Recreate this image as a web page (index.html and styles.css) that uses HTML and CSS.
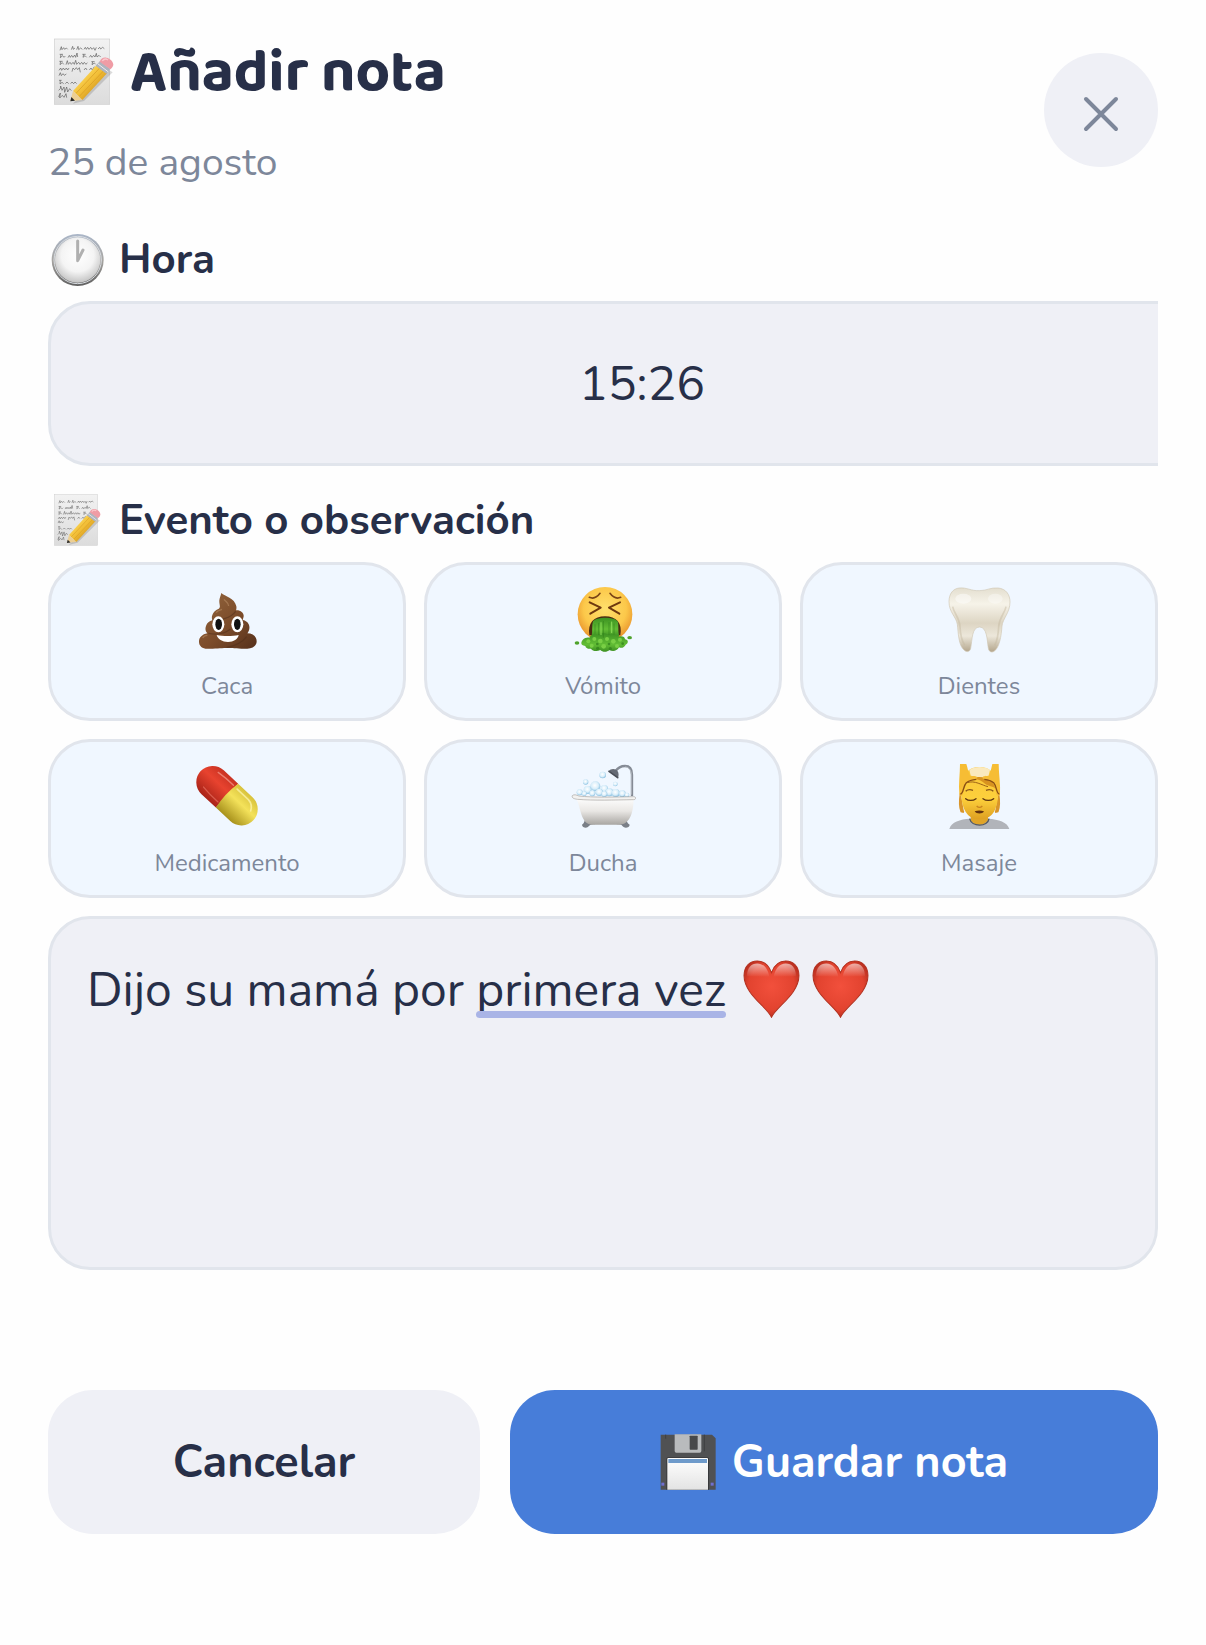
FILE: index.html
```html
<!DOCTYPE html>
<html lang="es">
<head>
    <meta charset="UTF-8">
    <meta name="viewport" content="width=device-width, initial-scale=1.0">
    <title>Añadir nota</title>
    <link rel="stylesheet" href="styles.css">
</head>
<body>
    <!-- Shared shapes -->
    <svg class="sprite" aria-hidden="true">
        <defs>
            <linearGradient id="paper" x1="0" y1="0" x2="0" y2="1">
                <stop offset="0" stop-color="#f2f2f2"/>
                <stop offset="1" stop-color="#dcdcdc"/>
            </linearGradient>
            <linearGradient id="pencil" x1="0" y1="0" x2="1" y2="1">
                <stop offset="0.2" stop-color="#ffdf62"/>
                <stop offset="0.5" stop-color="#f1bd36"/>
                <stop offset="0.8" stop-color="#c98c16"/>
            </linearGradient>
            <radialGradient id="heartFill" cx="0.5" cy="0.45" r="0.6">
                <stop offset="0" stop-color="#f2503c"/>
                <stop offset="0.7" stop-color="#e2432f"/>
                <stop offset="1" stop-color="#b02a1c"/>
            </radialGradient>
            <linearGradient id="heartShine" x1="0" y1="0" x2="0" y2="1">
                <stop offset="0" stop-color="#fff" stop-opacity="0.6"/>
                <stop offset="1" stop-color="#fff" stop-opacity="0"/>
            </linearGradient>
        </defs>
        <symbol id="memo" viewBox="-18 0 204 208">
            <rect x="1" y="2" width="166" height="196" fill="url(#paper)" stroke="#cfcfcf" stroke-width="2"/>
            <g fill="none" stroke="#5c5c5c" stroke-width="2" stroke-linejoin="round">
                <path d="M18 36l4-11 2 9 5-6 3 5 5-4 4 4M52 34l4-10 2 9 5-4M68 34l4-10 2 10 6-5 5 4M90 33l4-6 3 6 4-6 4 6 5-6 4 6 5-5 4 8 4-9M132 32l5-5 3 5 6-5 5 4"/>
                <path d="M17 48h10m-6 0l-2 10 7-6 4 5 4-4M42 58l4-7 3 6 4-6 4 6 5-7 3 7 4-13 2 12M85 48h10m-6 0l-2 9 6-5 5 5M106 57l4-6 4 6 5-6 4 5 4-11 2 11 6-5 5 5"/>
                <path d="M16 69h10m-6 0l-2 10 7-6 4 5M36 79l4-12 3 11 5-6 4 6 5-6 4 6 4-12 3 12 6-6 4 6 5-6 4 6 4-6 5 6 4-5M112 70h10m-6 0l-2 9 7-5 4 4"/>
                <path d="M15 96l5-7 3 7 5-7 4 6 5-6 4 6 4-6M54 100l3-11 5 5 5-6 4 6 5-6 3 14M90 95l5-6 4 6M106 95l5-6 4 6 6-10"/>
                <path d="M15 112l4-9 3 9 5-6 4 5 6-4M15 126h8m-4 0l-1 11 6-5 5 4M34 136l5-5 5 5M50 136l4-5 5 5 4-5 5 5"/>
                <path d="M14 156l5-5 1-8 4 13 6-10 2 16 6-16 3 15 6-10 5 6M14 176l5-12-2 15 8-8 5 6 6-11 2 12"/>
            </g>
            <path d="M56 196L160 92l16 10L90 188z" fill="#000" opacity="0.14"/>
            <path d="M57 158L128 80l31 25-74 80z" fill="url(#pencil)"/>
            <path d="M66 165l72-77M76 174l74-78" stroke="#d69a1f" stroke-width="2"/>
            <path d="M57 158l28 27-36 3z" fill="#edcf93"/>
            <path d="M52 176l11 11-14 2z" fill="#2b2b2b"/>
            <path d="M125 82l13-14 31 24-12 14z" fill="#aeb4be"/>
            <path d="M131 76l31 24" stroke="#eceef2" stroke-width="3"/>
            <path d="M137 70c4-10 12-14 20-12 12 2 20 12 21 20 0 6-4 11-9 15z" fill="#ef9ca5"/>
            <path d="M145 68c4-6 11-7 17-3" fill="none" stroke="#f9c8cd" stroke-width="4"/>
        </symbol>
        <symbol id="heart" viewBox="0 0 168 171">
            <path d="M84 169C70 138 3 100 3 46 3 18 20 3 42 3c20 0 34 12 42 34C92 15 106 3 126 3c22 0 39 15 39 43 0 54-67 92-81 123z" fill="url(#heartFill)" stroke="#b3311f" stroke-width="3"/>
            <path d="M12 48C12 22 24 10 42 10s31 14 36 40zM90 50c5-26 18-40 36-40s30 12 30 38z" fill="url(#heartShine)"/>
        </symbol>
    </svg>

    <main class="sheet">
        <header class="header">
            <div>
                <h1 class="title"><svg class="title-icon" aria-hidden="true"><use href="#memo"/></svg>Añadir nota</h1>
                <p class="date">25 de agosto</p>
            </div>
            <button type="button" class="close" aria-label="Cerrar">
                <svg viewBox="0 0 36 36" aria-hidden="true"><path d="M3 3l30 30M33 3L3 33"/></svg>
            </button>
        </header>

        <form class="note-form">
            <label class="label" for="hora">
                <svg class="clock" viewBox="54 36 168 162" aria-hidden="true">
                    <defs>
                        <linearGradient id="rim" x1="0" y1="0" x2="0" y2="1">
                            <stop offset="0" stop-color="#aab6c8"/>
                            <stop offset="0.5" stop-color="#a8a6a3"/>
                            <stop offset="1" stop-color="#5f5f5f"/>
                        </linearGradient>
                        <radialGradient id="face" cx="0.5" cy="0.4" r="0.6">
                            <stop offset="0" stop-color="#fff"/>
                            <stop offset="0.6" stop-color="#f4f4f4"/>
                            <stop offset="1" stop-color="#c4c4c4"/>
                        </radialGradient>
                    </defs>
                    <circle cx="143" cy="117" r="78" fill="url(#rim)"/>
                    <circle cx="143" cy="117" r="71" fill="none" stroke="#d9dde2" stroke-width="3"/>
                    <circle cx="143" cy="117" r="68" fill="url(#face)"/>
                    <path d="M143 60v59l16-32" fill="none" stroke="#b0b0b0" stroke-width="9" stroke-linecap="round" stroke-linejoin="round"/>
                </svg>
                Hora
            </label>
            <div class="time-clip">
                <input class="time" type="text" inputmode="numeric" id="hora" name="hora" value="15:26">
            </div>

            <label class="label" for="nota"><svg class="label-memo" aria-hidden="true"><use href="#memo"/></svg>Evento o observación</label>
            <div class="events">
                <button type="button" class="event">
                    <svg viewBox="462 81 198 198" aria-hidden="true">
                        <defs>
                            <linearGradient id="poop" x1="0" y1="0" x2="1" y2="1">
                                <stop offset="0" stop-color="#94673f"/>
                                <stop offset="0.55" stop-color="#7c4c2a"/>
                                <stop offset="1" stop-color="#55301b"/>
                            </linearGradient>
                        </defs>
                        <path d="M544 99c10 10 40 14 45 40 1 5 0 9-1 12 14-1 24 8 23 18-1 5-2 8-3 11 14 2 22 14 20 26-1 6-3 10-6 14 16 0 28 10 28 24 0 14-12 22-28 22-24 1-48-2-60-2s-40 3-60 2c-15 0-25-8-25-21s10-22 25-25c-6-6-7-14-4-22 3-9 10-15 19-17-4-10 0-26 18-34 9-6 2-14 3-26 1-8 4-14 6-22z" fill="url(#poop)"/>
                        <path d="M519 178c22 4 52-3 68-24M505 220c30 6 50 0 66-12M560 262c30-4 46-14 60-32" fill="none" stroke="#4f2d19" stroke-width="4" opacity="0.5"/>
                        <path d="M552 118c6 8 14 10 14 20M528 158c4-6 12-8 18-10M488 234c3-5 8-8 14-8" fill="none" stroke="#b58a62" stroke-width="4" opacity="0.6"/>
                        <ellipse cx="535" cy="193" rx="18" ry="24" fill="#fff"/>
                        <ellipse cx="592" cy="193" rx="18" ry="24" fill="#fff"/>
                        <ellipse cx="536" cy="193" rx="10" ry="17" fill="#111"/>
                        <ellipse cx="592" cy="193" rx="10" ry="17" fill="#111"/>
                        <path d="M530 225c20 4 46 4 66 0-2 12-15 21-32 21s-31-9-34-21z" fill="#fff"/>
                    </svg>
                    <span>Caca</span>
                </button>
                <button type="button" class="event">
                    <svg viewBox="90 51 198 198" aria-hidden="true">
                        <defs>
                            <radialGradient id="skin" cx="0.5" cy="0.4" r="0.6">
                                <stop offset="0" stop-color="#ffe06c"/>
                                <stop offset="0.65" stop-color="#fcc84a"/>
                                <stop offset="1" stop-color="#e8922c"/>
                            </radialGradient>
                            <linearGradient id="slime" x1="0" y1="0" x2="0" y2="1">
                                <stop offset="0" stop-color="#3c9222"/>
                                <stop offset="0.6" stop-color="#62bd35"/>
                                <stop offset="1" stop-color="#3c9022"/>
                            </linearGradient>
                        </defs>
                        <circle cx="195" cy="133" r="82" fill="url(#skin)"/>
                        <path d="M148 82c11 5 23 0 32-12M242 82c-11 5-23 0-32-12" fill="none" stroke="#7b4416" stroke-width="5" stroke-linecap="round"/>
                        <path d="M149 97l33 16-31 18M240 97l-33 16 31 18" fill="none" stroke="#6e390f" stroke-width="6" stroke-linecap="round" stroke-linejoin="round"/>
                        <path d="M148 196c-6-38 14-57 47-57s53 19 46 57z" fill="#4b2b12"/>
                        <path d="M155 200c3-20 0-34 4-46 12-14 62-14 74 0 4 12 0 28 5 46z" fill="url(#slime)"/>
                        <path d="M124 220c0-10 12-20 24-17 6-12 18-12 26-8 10-8 24-6 32-1 10-4 24-2 29 6 10-4 20 0 20 8 10 0 12 12 2 16-4 8-12 12-20 8-6 12-20 14-28 8-10 8-22 6-28 0-12 6-24 2-28-4-8 2-16-2-17-8-8-1-12-3-12-8z" fill="url(#slime)"/>
                        <path d="M176 160v34M190 154v48M207 158v36M222 162v30M165 164v26" stroke="#2d7b19" stroke-width="3" stroke-linecap="round" opacity="0.5"/>
                        <path d="M183 158v36M215 156v32" stroke="#8bdc58" stroke-width="3" stroke-linecap="round"/>
                        <g fill="#79cf45">
                            <circle cx="145" cy="214" r="6"/><circle cx="163" cy="207" r="6"/><circle cx="181" cy="213" r="7"/>
                            <circle cx="201" cy="207" r="6"/><circle cx="220" cy="214" r="7"/><circle cx="240" cy="209" r="6"/>
                            <circle cx="155" cy="227" r="6"/><circle cx="191" cy="229" r="7"/><circle cx="231" cy="228" r="6"/>
                        </g>
                        <g fill="#2f7e1b" opacity="0.7">
                            <circle cx="172" cy="222" r="4"/><circle cx="207" cy="222" r="4"/><circle cx="211" cy="236" r="5"/>
                            <circle cx="173" cy="235" r="5"/><circle cx="248" cy="221" r="4"/>
                        </g>
                        <ellipse cx="111" cy="219" rx="7" ry="5" fill="#4ea22b"/>
                        <ellipse cx="269" cy="203" rx="7" ry="5" fill="#4ea22b"/>
                    </svg>
                    <span>Vómito</span>
                </button>
                <button type="button" class="event">
                    <svg viewBox="78 51 198 198" aria-hidden="true">
                        <defs>
                            <linearGradient id="tooth" x1="0" y1="0" x2="0" y2="1">
                                <stop offset="0" stop-color="#e4dfd0"/>
                                <stop offset="0.25" stop-color="#f6f3e9"/>
                                <stop offset="0.55" stop-color="#ddd5c3"/>
                                <stop offset="0.75" stop-color="#ece7da"/>
                                <stop offset="1" stop-color="#b3a58b"/>
                            </linearGradient>
                        </defs>
                        <path d="M118 54c24-2 34 9 60 8 22 0 34-10 56-8 24 2 36 20 36 42 0 32-22 50-24 72-2 30-8 66-24 76-8 5-16 0-17-10-4-26-4-62-26-63-24 0-22 38-27 64-2 10-11 13-19 6-18-14-18-54-21-78-3-22-25-36-25-68 0-24 12-39 31-41z" fill="url(#tooth)" stroke="#d0c7b3" stroke-width="2"/>
                        <path d="M98 110c4 22 20 30 22 60 1 20 6 44 14 56M258 110c-4 22-20 30-22 60-1 20-5 44-12 56" fill="none" stroke="#c4b99f" stroke-width="5" opacity="0.45"/>
                        <ellipse cx="130" cy="86" rx="24" ry="15" fill="#fff" opacity="0.45"/>
                        <ellipse cx="226" cy="86" rx="22" ry="15" fill="#fff" opacity="0.35"/>
                    </svg>
                    <span>Dientes</span>
                </button>
                <button type="button" class="event">
                    <svg viewBox="42 42 198 198" aria-hidden="true">
                        <defs>
                            <linearGradient id="pillRed" x1="0" y1="0" x2="0" y2="1">
                                <stop offset="0" stop-color="#c93222"/>
                                <stop offset="0.4" stop-color="#e8432f"/>
                                <stop offset="1" stop-color="#a92318"/>
                            </linearGradient>
                            <linearGradient id="pillYellow" x1="0" y1="0" x2="0" y2="1">
                                <stop offset="0" stop-color="#d8c23c"/>
                                <stop offset="0.4" stop-color="#f4e25a"/>
                                <stop offset="1" stop-color="#a8921c"/>
                            </linearGradient>
                        </defs>
                        <g transform="rotate(43 141 137)">
                            <path d="M141 88H82a49 49 0 0 0 0 98h59z" fill="url(#pillRed)"/>
                            <path d="M141 88h59a49 49 0 0 1 0 98h-59q-9-49 0-98z" fill="url(#pillYellow)"/>
                            <path d="M74 104q28-4 60-3" fill="none" stroke="#f59b8f" stroke-width="4" stroke-linecap="round" opacity="0.7"/>
                            <path d="M72 166q28 4 62 3" fill="none" stroke="#f58a7a" stroke-width="4" stroke-linecap="round" opacity="0.5"/>
                            <path d="M150 102h46q20 2 28 20" fill="none" stroke="#fff7b0" stroke-width="5" stroke-linecap="round" opacity="0.7"/>
                        </g>
                    </svg>
                    <span>Medicamento</span>
                </button>
                <button type="button" class="event">
                    <svg viewBox="30 42 198 198" aria-hidden="true">
                        <defs>
                            <linearGradient id="tub" x1="0" y1="0" x2="0" y2="1">
                                <stop offset="0" stop-color="#fff"/>
                                <stop offset="0.5" stop-color="#e9e7e4"/>
                                <stop offset="1" stop-color="#a9a6a2"/>
                            </linearGradient>
                            <radialGradient id="bubble" cx="0.45" cy="0.4" r="0.6">
                                <stop offset="0" stop-color="#fff"/>
                                <stop offset="0.6" stop-color="#d9eefa"/>
                                <stop offset="1" stop-color="#86bfe0"/>
                            </radialGradient>
                        </defs>
                        <path d="M216 138V74c0-18-9-26-21-26-12 0-22 6-29 16" fill="none" stroke="#858b95" stroke-width="7"/>
                        <path d="M214 134V74c0-14-8-23-19-23" fill="none" stroke="#c9ced5" stroke-width="2"/>
                        <path d="M146 64c6-9 20-10 27 0 4 6 3 13 1 20z" fill="#666b75"/>
                        <path d="M147 64l26 19" stroke="#4b4f57" stroke-width="5" stroke-linecap="round"/>
                        <g fill="url(#bubble)">
                            <circle cx="77" cy="96" r="8"/><circle cx="128" cy="75" r="10"/><circle cx="166" cy="102" r="7"/>
                            <circle cx="59" cy="127" r="9"/><circle cx="83" cy="120" r="12"/><circle cx="106" cy="109" r="15"/>
                            <circle cx="133" cy="116" r="11"/><circle cx="118" cy="127" r="11"/><circle cx="97" cy="130" r="9"/>
                            <circle cx="148" cy="127" r="12"/><circle cx="167" cy="129" r="12"/><circle cx="187" cy="131" r="10"/>
                            <circle cx="133" cy="132" r="9"/><circle cx="201" cy="135" r="7"/><circle cx="73" cy="131" r="7"/>
                        </g>
                        <path d="M80 202c-8 2-3 16-14 22 0 10 16 12 20 5 6-6 12-6 20-6zM194 202c8 2 3 16 15 22 0 10-16 12-21 5-4-6-10-6-18-6z" fill="#7a7f87"/>
                        <path d="M45 142h176c0 38-8 82-43 82H98c-28 0-34-30-42-60-2-8-5-14-11-22z" fill="url(#tub)"/>
                        <path d="M37 137c5-5 12-2 20 1 40 5 110 3 164 2 8 0 8 9 0 9-60 1-120 3-168-1-8-1-19-3-16-11z" fill="#f3f2f0" stroke="#a5a29e" stroke-width="2"/>
                    </svg>
                    <span>Ducha</span>
                </button>
                <button type="button" class="event">
                    <svg viewBox="48 42 198 198" aria-hidden="true">
                        <defs>
                            <linearGradient id="massageSkin" x1="0" y1="0" x2="0" y2="1">
                                <stop offset="0" stop-color="#f9c638"/>
                                <stop offset="0.6" stop-color="#fdd03c"/>
                                <stop offset="1" stop-color="#dfa021"/>
                            </linearGradient>
                        </defs>
                        <path d="M58 237c6-22 32-29 62-31h54c32 2 58 10 64 31z" fill="#b1b4ba"/>
                        <path d="M122 190h52v20c-10 19-42 19-52 0z" fill="#e0a428"/>
                        <path d="M119 206c5 26 55 26 58 0" fill="none" stroke="#55585e" stroke-width="4"/>
                        <path d="M92 130c-3 20-3 42 2 54l8 2M205 130c3 20 3 42-2 54l-8 2" fill="#d9952a" stroke="#d9952a" stroke-width="6"/>
                        <path d="M94 120c0-50 23-69 54-69s56 19 56 69c2 58-17 88-55 88s-57-33-55-88z" fill="url(#massageSkin)"/>
                        <path d="M118 60c12-12 50-12 62 0l-6 24h-50z" fill="#fae9bd"/>
                        <path d="M98 126c2-24 14-36 28-38 20-2 28 4 40 14 8 6 24 6 32 16 2-22-6-32-24-34-30-6-62-3-72 16z" fill="#d8931f"/>
                        <path d="M112 98c22-8 44 8 62 12" fill="none" stroke="#9e6317" stroke-width="3"/>
                        <path d="M90 42h19c4 12 6 26 11 35 8 1 20 0 22 5 3 7-16 6-24 9-14 8-14 25-20 44-3 4-9 3-10-3-3-28 2-60 2-90zM187 42h19c0 30 6 62 4 90-1 6-7 7-10 3-6-21-6-36-19-44-8-3-26-2-24-9 2-5 13-4 20-5 5-10 7-23 10-35z" fill="#f6bd34"/>
                        <path d="M91 132c10 0 8-24 18-34q10-8 30-10M208 132c-9 0-8-24-17-34q-10-8-28-10" fill="none" stroke="#8a4f14" stroke-width="4"/>
                        <path d="M107 124c6-6 14-6 22-3M190 124c-6-6-14-6-22-3" fill="none" stroke="#87551a" stroke-width="4"/>
                        <path d="M107 146c8 7 22 7 31 0M159 146c9 7 23 7 32 0" fill="none" stroke="#5d3510" stroke-width="4" stroke-linecap="round"/>
                        <path d="M140 168c5 5 12 5 17 0" fill="none" stroke="#c8841d" stroke-width="4"/>
                        <path d="M134 184c10-3 18-3 28 0-4 9-23 9-28 0z" fill="#63320f"/>
                    </svg>
                    <span>Masaje</span>
                </button>
            </div>

            <div class="note-box">
                <textarea class="note" id="nota" name="nota" spellcheck="false">Dijo su mamá por primera vez</textarea>
                <span class="suggestion"></span>
                <div class="hearts">
                    <svg aria-hidden="true"><use href="#heart"/></svg>
                    <svg aria-hidden="true"><use href="#heart"/></svg>
                </div>
            </div>

            <div class="actions">
                <button type="button" class="btn btn-cancel">Cancelar</button>
                <button type="submit" class="btn btn-save">
                    <svg viewBox="64 40 168 168" aria-hidden="true">
                        <defs>
                            <linearGradient id="diskLabel" x1="0" y1="0" x2="0" y2="1">
                                <stop offset="0" stop-color="#fff"/>
                                <stop offset="1" stop-color="#e3e3e3"/>
                            </linearGradient>
                        </defs>
                        <path d="M66 42h154l11 11v154H66z" fill="#505153"/>
                        <path d="M81 42v12M197 42v50" stroke="#3f4042" stroke-width="3"/>
                        <path d="M108 41h80v50q0 5-5 5h-70q-5 0-5-5z" fill="#b9bbbd"/>
                        <rect x="153" y="45" width="24" height="42" rx="2" fill="#47484a"/>
                        <path d="M83 207v-92q0-5 5-5h118q5 0 5 5v92z" fill="#38393b"/>
                        <path d="M86 207v-92q0-3 3-3h116q3 0 3 3v92z" fill="url(#diskLabel)"/>
                        <path d="M89 115h116v12H89z" fill="#6f9bcb"/>
                        <rect x="68" y="186" width="9" height="9" fill="#6f6fd0"/>
                        <rect x="216" y="186" width="9" height="9" fill="#6f6fd0"/>
                    </svg>
                    Guardar nota
                </button>
            </div>
        </form>
    </main>
</body>
</html>
```
FILE: styles.css
```css
* {
    box-sizing: border-box;
}
body {
    margin: 0;
    background-color: #fefefe;
    color: #272f48;
    font-family: Nunito, Lato, "Noto Sans", sans-serif;
}
button, input, textarea {
    font-family: inherit;
    color: inherit;
}
button {
    border: none;
    cursor: pointer;
}
.sprite {
    position: absolute;
    width: 0;
    height: 0;
}
.sheet {
    padding: 33px 48px 108px;
}
.header {
    display: flex;
    justify-content: space-between;
    align-items: center;
    margin-bottom: 46px;
}
.title {
    display: flex;
    align-items: center;
    gap: 14px;
    margin: 0 0 26px;
    font-family: "Baloo 2", Lato, "Noto Sans", sans-serif;
    font-size: 60px;
    font-weight: bold;
    line-height: 80px;
}
.title-icon {
    width: 68px;
    height: 70px;
}
.date {
    margin: 0;
    color: #7d879a;
    font-size: 39px;
    line-height: 48px;
}
.close {
    display: flex;
    align-items: center;
    justify-content: center;
    width: 114px;
    height: 114px;
    padding: 8px 0 0;
    border-radius: 50%;
    background-color: #eff0f6;
}
.close svg {
    width: 36px;
    height: 36px;
    fill: none;
    stroke: #7d879a;
    stroke-width: 4;
    stroke-linecap: round;
}
.label {
    display: flex;
    align-items: center;
    gap: 15px;
    margin-bottom: 14px;
    font-size: 42px;
    font-weight: bold;
    line-height: 54px;
}
.clock {
    width: 56px;
    height: 54px;
}
.label-memo {
    width: 56px;
    height: 54px;
}
/* the time field is wider than the form and runs off its right edge */
.time-clip {
    overflow: hidden;
    margin-bottom: 28px;
}
.time {
    display: block;
    width: calc(100% + 78px);
    height: 165px;
    padding: 36px;
    border: 3px solid #e1e5ec;
    border-radius: 42px;
    background-color: #eff0f6;
    font-size: 48px;
    text-align: center;
}
.events {
    display: grid;
    grid-template-columns: repeat(3, 1fr);
    gap: 18px;
    margin-bottom: 18px;
}
.event {
    display: flex;
    flex-direction: column;
    align-items: center;
    gap: 15px;
    padding: 22px 12px 14px;
    border: 3px solid #e1e5ec;
    border-radius: 42px;
    background-color: #f0f7ff;
    color: #7d879a;
    font-size: 24px;
    line-height: 36px;
}
.event svg {
    width: 66px;
    height: 66px;
}
.note-box {
    position: relative;
    margin-bottom: 120px;
}
.note {
    display: block;
    width: 100%;
    height: 354px;
    padding: 38px 36px;
    border: 3px solid #e1e5ec;
    border-radius: 42px;
    background-color: #eff0f6;
    font-size: 48px;
    line-height: 66px;
    resize: none;
}
.suggestion {
    position: absolute;
    top: 95px;
    left: 428px;
    width: 250px;
    height: 7px;
    border-radius: 4px;
    background-color: #a9b4e6;
}
.hearts {
    position: absolute;
    top: 44px;
    left: 695px;
    display: flex;
    gap: 12px;
}
.hearts svg {
    width: 57px;
    height: 58px;
}
.actions {
    display: grid;
    grid-template-columns: 2fr 3fr;
    gap: 30px;
}
.btn {
    display: flex;
    align-items: center;
    justify-content: center;
    gap: 16px;
    height: 144px;
    border-radius: 45px;
    font-size: 45px;
    font-weight: bold;
}
.btn svg {
    width: 56px;
    height: 56px;
}
.btn-cancel {
    background-color: #eff0f6;
}
.btn-save {
    background-color: #477dd9;
    color: #fff;
}
```
